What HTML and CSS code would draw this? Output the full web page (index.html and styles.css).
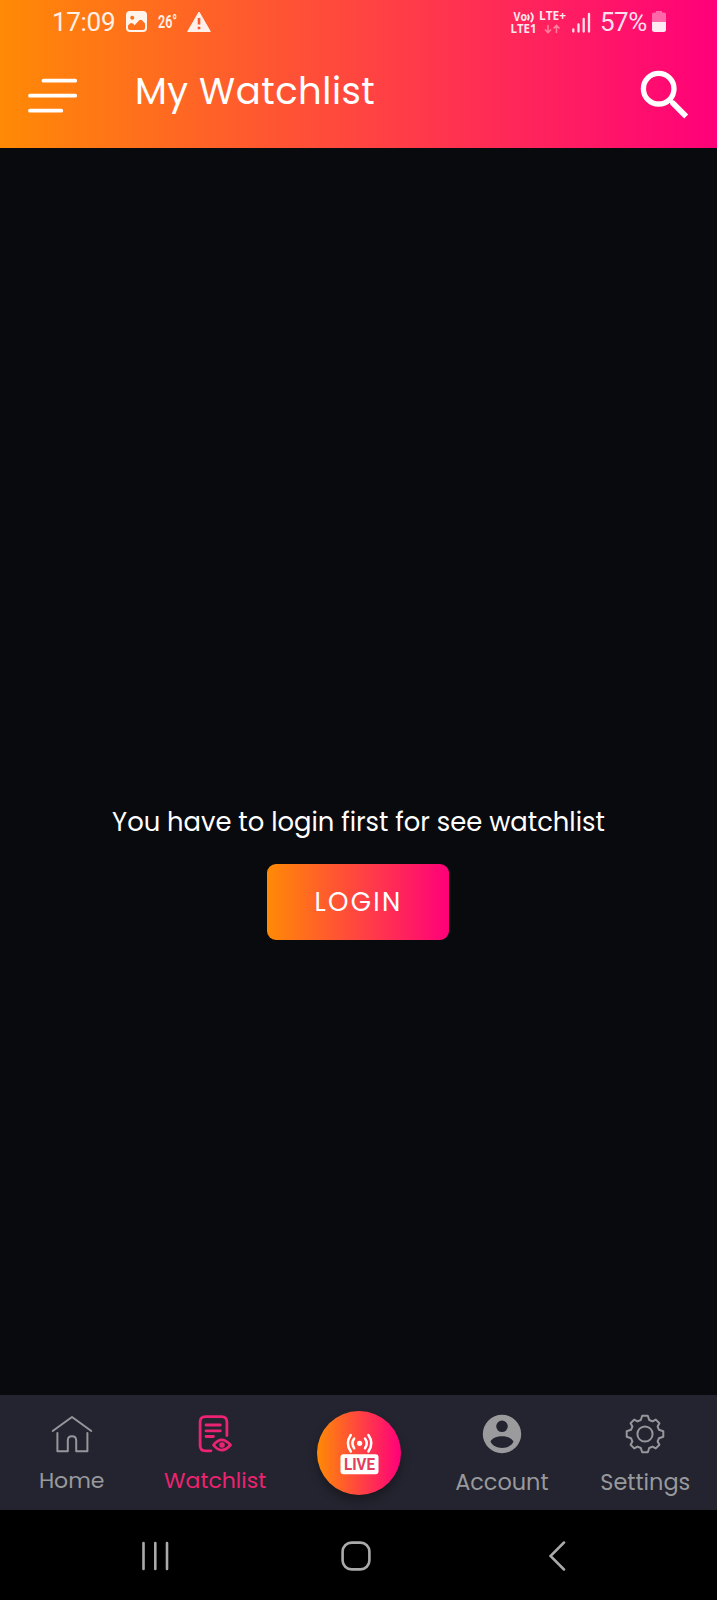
FILE: index.html
```html
<!DOCTYPE html>
<html lang="en">
<head>
<meta charset="utf-8">
<title>My Watchlist</title>
<link rel="stylesheet" href="styles.css">
</head>
<body>
<div class="screen">
  <header class="header">
    <div class="status">
      <span class="time">17:09</span>
      <svg class="picture" width="21" height="21" viewBox="0 0 21 21"><path fill="#fff5ec" fill-rule="evenodd" d="M4 0H17Q21 0 21 4V17Q21 21 17 21H4Q0 21 0 17V4Q0 0 4 0ZM2 14.6V17Q2 19 4 19H17Q19 19 19 17V12.5L16 9.2Q14.5 8 13 9.6L8.6 14.2L6.8 12.6Q5.3 11.5 4 12.6ZM6.2 4.8A2 2 0 1 0 6.3 4.8Z"/></svg>
      <span class="temp">26°</span>
      <svg class="warning" width="24" height="21" viewBox="0 0 24 21"><path d="M12 1L23.3 20.5H.7Z" fill="#fff1ea" stroke="#fff1ea" stroke-linejoin="round"/><path d="M12 7V13.5M12 15.8V18.2" stroke="#ff5a2e" stroke-width="2.6"/></svg>
      <svg class="network" width="80" height="28" viewBox="0 -3 80 28">
        <g class="net-text"><text x="2.5" y="10.3" textLength="13.5" lengthAdjust="spacingAndGlyphs">Vo</text><text x="-.5" y="21.7" textLength="26" lengthAdjust="spacingAndGlyphs">LTE1</text><text x="28" y="9.3" textLength="27" lengthAdjust="spacingAndGlyphs">LTE+</text></g>
        <path d="M16.8 3.5Q18.8 6.3 16.8 9.2M19.8 1.5Q24 6.3 19.8 11.2" fill="none" stroke="#ffe7f0" stroke-width="1.8"/>
        <path d="M37 14V21.5M34 18.5L37 21.7L40 18.5M45.5 22V14.5M42.5 17.5L45.5 14.3L48.5 17.5" fill="none" stroke="#ff7f9f" stroke-width="1.5"/>
        <path d="M62.3 18.5V20.5M67.5 13.5V20.5M72.7 8V20.5M78 3V20.5" stroke="#ffe2ec" stroke-width="2.3" stroke-linecap="round"/>
      </svg>
      <span class="percent">57%</span>
      <svg class="battery" width="14" height="21" viewBox="0 0 14 21"><path d="M4 0H10V1.6H12Q14 1.6 14 3.6V11H0V3.6Q0 1.6 2 1.6H4Z" fill="#ff67a9"/><path d="M0 11H14V18.5Q14 21 11.5 21H2.5Q0 21 0 18.5Z" fill="#ffe9f3"/></svg>
    </div>
    <div class="toolbar">
      <svg class="menu" width="50" height="36" viewBox="0 0 50 36"><path d="M15.5 2.7H47.2M2 17.7H47.2M2 32.7H33.3" stroke="#fff" stroke-width="3.8" stroke-linecap="round"/></svg>
      <h1 class="title">My Watchlist</h1>
      <svg class="search" width="50" height="50" viewBox="0 0 50 50"><circle cx="18.7" cy="18.7" r="15.3" fill="none" stroke="#fff" stroke-width="5.3"/><path d="M30 29L34.5 30.7L48.2 44.6L44.2 48.4L30.5 34.8L29 30Z" fill="#fff"/></svg>
    </div>
  </header>
  <main class="content">
    <p class="message">You have to login first for see watchlist</p>
    <button class="login">LOGIN</button>
  </main>
  <nav class="tabs">
    <a class="tab">
      <svg width="42" height="42" viewBox="-21 -21 42 42" fill="none" stroke="#96979c" stroke-width="2" stroke-linecap="round" stroke-linejoin="round"><path d="M-19.3-3L0-17L19.3-3M-14.6-1V17.2H-4.2V6.5Q-4.2 2.2 0 2.2Q4.2 2.2 4.2 6.5V17.2H15.4V-1"/></svg>
      <span class="label home">Home</span>
    </a>
    <a class="tab active">
      <svg width="42" height="42" viewBox="-21 -21 42 42" fill="none" stroke="#ec2370" stroke-width="2.8" stroke-linecap="round" stroke-linejoin="round"><path d="M-4 16.8H-9.5Q-14.9 16.8-14.9 11.5V-12Q-14.9-17.4-9.5-17.4H6.5Q11.9-17.4 11.9-12V1.5M-9-9H5.3M-9-3.2H5.3M-9 2.5H-1.5M-1.5 11Q6.5 0.8 15.5 11Q6.5 21.2-1.5 11Z"/><circle cx="7" cy="11" r="2.8" fill="#ec2370" stroke="none"/></svg>
      <span class="label watch">Watchlist</span>
    </a>
    <a class="tab">
      <span class="live">
        <svg width="84" height="84" viewBox="0 0 84 84"><g fill="none" stroke="#fff" stroke-width="2.5" stroke-linecap="round"><path d="M37.2 27.5Q33.6 32.3 37.2 37.2M33.8 24Q28 32.3 33.8 40.5M48 27.5Q51.6 32.3 48 37.2M51.4 24Q57.2 32.3 51.4 40.5"/></g><circle cx="42.6" cy="32.3" r="2.6" fill="#fff"/><rect x="23.5" y="43.3" width="38" height="20" rx="3" fill="#fff"/><text class="live-text" x="27" y="59.3" textLength="31" lengthAdjust="spacingAndGlyphs">LIVE</text></svg>
      </span>
    </a>
    <a class="tab">
      <svg width="42" height="42" viewBox="-21 -21 42 42"><path fill="#9b9b9d" fill-rule="evenodd" d="M0-19.2A19.2 19.2 0 1 1 0 19.2A19.2 19.2 0 1 1 0-19.2ZM0-13.5A5.8 5.8 0 1 0 0-1.9A5.8 5.8 0 1 0 0-13.5ZM-11.5 7.5C-8 16 8 16 11.5 7.5C8 .5-8 .5-11.5 7.5Z"/></svg>
      <span class="label account">Account</span>
    </a>
    <a class="tab">
      <svg width="42" height="42" viewBox="-21 -21 42 42" fill="none" stroke="#96979c" stroke-width="2" stroke-linejoin="round"><circle r="7.6"/><path d="M-4.2-14L-2.8-18.3H2.8L4.2-14L7.5-12.6L10.8-14.4L14.4-10.8L12.6-7.5L14-4.2L18.3-2.8V2.8L14 4.2L12.6 7.5L14.4 10.8L10.8 14.4L7.5 12.6L4.2 14L2.8 18.3H-2.8L-4.2 14L-7.5 12.6L-10.8 14.4L-14.4 10.8L-12.6 7.5L-14 4.2L-18.3 2.8V-2.8L-14-4.2L-12.6-7.5L-14.4-10.8L-10.8-14.4L-7.5-12.6Z"/></svg>
      <span class="label settings">Settings</span>
    </a>
  </nav>
  <footer class="system">
    <svg width="28" height="30" viewBox="0 0 28 30"><path d="M1.5 2V28M13.3 2V28M25 2V28" stroke="#aaa" stroke-width="2.6" stroke-linecap="round"/></svg>
    <svg class="home-key" width="30" height="30" viewBox="0 0 30 30"><rect x="1.6" y="1.6" width="26.8" height="26.8" rx="9" fill="none" stroke="#aaa" stroke-width="2.6"/></svg>
    <svg width="17" height="30" viewBox="0 0 17 30"><path d="M15 1.5L1.5 15L15 28.5" fill="none" stroke="#aaa" stroke-width="2.5" stroke-linecap="round"/></svg>
  </footer>
</div>
</body>
</html>
```
FILE: styles.css
```css
* { box-sizing: border-box; }
body { margin: 0; background: #090a0e; }
svg { display: block; flex: none; }
.screen {
  width: 717px;
  height: 1600px;
  display: flex;
  flex-direction: column;
  color: #fff;
  font-family: Poppins, Inter, sans-serif;
  white-space: nowrap;
}
.header {
  height: 148px;
  background: linear-gradient(90deg, #ff8a05, #ff4540 50%, #ff007a);
}
.status {
  height: 43px;
  display: flex;
  align-items: center;
  padding-left: 52px;
  font-family: Roboto, sans-serif;
  color: #fff1e6;
}
.time { width: 74px; font-size: 26px; letter-spacing: -0.3px; }
.temp {
  width: 29px;
  margin-left: 11px;
  font-size: 18.5px;
  font-weight: 600;
  transform: scaleX(0.68);
  transform-origin: left;
}
.network { margin-left: 300px; }
.net-text { font: 700 11.5px "Open Sans", sans-serif; fill: #ffe7f0; }
.percent { width: 52px; margin-left: 9px; font-size: 26px; letter-spacing: -0.5px; color: #ffdfec; }
.toolbar {
  height: 105px;
  display: flex;
  align-items: flex-start;
  padding: 27px 27px 0 28px;
}
.menu { margin-top: 8px; }
.title {
  flex: 1;
  margin: -1px 0 0 57px;
  font-size: 37px;
  line-height: 44px;
  font-weight: 400;
  letter-spacing: 0.5px;
}
.content {
  flex: 1;
  display: flex;
  flex-direction: column;
  align-items: center;
  padding-top: 653px;
}
.message {
  margin: 0;
  font-size: 25.8px;
  line-height: 42px;
  font-weight: 400;
}
.login {
  width: 182px;
  height: 76px;
  margin: 21px 1px 0 0;
  padding: 0 0 0 1px;
  border: 0;
  border-radius: 9px;
  background: linear-gradient(90deg, #ff8a05, #ff4540 50%, #ff007a);
  color: #fff;
  font: 400 26px/36px Poppins, Inter, sans-serif;
  letter-spacing: 2.3px;
}
.tabs {
  height: 115px;
  display: grid;
  grid-template-columns: repeat(5, 1fr);
  background: #23242f;
}
.tab {
  display: flex;
  flex-direction: column;
  align-items: center;
  padding-top: 18px;
  color: #98999d;
}
.active { color: #ec2370; }
.label { margin-top: 10px; font-size: 22px; line-height: 32px; font-weight: 400; }
.account, .settings { margin-top: 11px; font-size: 22.4px; }
.live {
  width: 84px;
  height: 84px;
  margin: -2.5px 0 0 1px;
  border-radius: 50%;
  background: linear-gradient(90deg, #ff8a05, #ff4540 50%, #ff007a);
  box-shadow: 0 6px 10px rgba(0, 0, 0, 0.3);
}
.live-text { font: 700 17px Roboto, sans-serif; fill: #e33f5c; }
.system {
  height: 90px;
  display: flex;
  justify-content: space-between;
  padding: 31px 151px 0 142px;
  background: #000;
}
.home-key { margin-right: 8px; }
```
